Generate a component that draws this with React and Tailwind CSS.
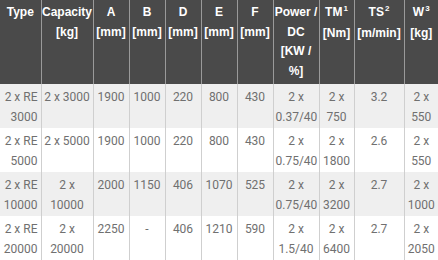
const cols = [
  { w: 'w-[41px]', head: ['Type'] },
  { w: 'w-[52px]', head: ['Capacity', '[kg]'] },
  { w: 'w-[36px]', head: ['A', '[mm]'] },
  { w: 'w-[36px]', head: ['B', '[mm]'] },
  { w: 'w-[36px]', head: ['D', '[mm]'] },
  { w: 'w-[36px]', head: ['E', '[mm]'] },
  { w: 'w-[36px]', head: ['F', '[mm]'] },
  { w: 'w-[46px]', head: ['Power /', 'DC', '[KW /', '%]'] },
  { w: 'w-[35px]', head: ['TM', '[Nm]'], sup: '1' },
  { w: 'w-[50px]', head: ['TS', '[m/min]'], sup: '2' },
  { w: 'w-[34px]', head: ['W', '[kg]'], sup: '3' },
];

const rows = [
  ['2 x RE 3000', '2 x 3000', '1900', '1000', '220', '800', '430', '2 x 0.37/40', '2 x 750', '3.2', '2 x 550'],
  ['2 x RE 5000', '2 x 5000', '1900', '1000', '220', '800', '430', '2 x 0.75/40', '2 x 1800', '2.6', '2 x 550'],
  ['2 x RE 10000', '2 x 10000', '2000', '1150', '406', '1070', '525', '2 x 0.75/40', '2 x 3200', '2.7', '2 x 1000'],
  ['2 x RE 20000', '2 x 20000', '2250', '-', '406', '1210', '590', '2 x 1.5/40', '2 x 6400', '2.7', '2 x 2050'],
];

export default function App() {
  return (
    <div className="w-[438px] h-[260px] overflow-hidden bg-white">
      <table className="table-fixed border-collapse w-[438px]">
        <colgroup>
          {cols.map((c, i) => (
            <col key={i} className={c.w} />
          ))}
        </colgroup>
        <thead>
          <tr className="h-[84px] bg-[#4a4a4a]">
            {cols.map((c, i) => (
              <th
                key={i}
                className="align-top text-center px-0 pt-[3px] text-white font-bold text-[12px] leading-[19.5px] whitespace-nowrap border-l border-[#9a9a9a] first:border-l-0"
                style={{ fontFamily: 'Tahoma, "Liberation Sans", sans-serif' }}
              >
                {c.head.map((line, li) => (
                  <div key={li}>
                    {line}
                    {li === 0 && c.sup && (
                      <span className="text-[8px] relative -top-[5px] ml-[1px]">{c.sup}</span>
                    )}
                  </div>
                ))}
              </th>
            ))}
          </tr>
        </thead>
        <tbody>
          {rows.map((r, ri) => (
            <tr key={ri} className={`h-[44px] ${ri % 2 === 0 ? 'bg-[#efefef]' : 'bg-white'}`}>
              {r.map((v, ci) => (
                <td
                  key={ci}
                  className={`align-top pt-[3px] pb-[1px] text-[12px] leading-[20px] text-[#707070] border-l border-[#cfcfcf] first:border-l-0 ${
                    ci === 0 ? 'text-right pr-[3px] pl-[2px]' : 'text-center px-[2px]'
                  }`}
                  style={{ fontFamily: 'Roboto, "Liberation Sans", sans-serif' }}
                >
                  {v}
                </td>
              ))}
            </tr>
          ))}
        </tbody>
      </table>
    </div>
  );
}
